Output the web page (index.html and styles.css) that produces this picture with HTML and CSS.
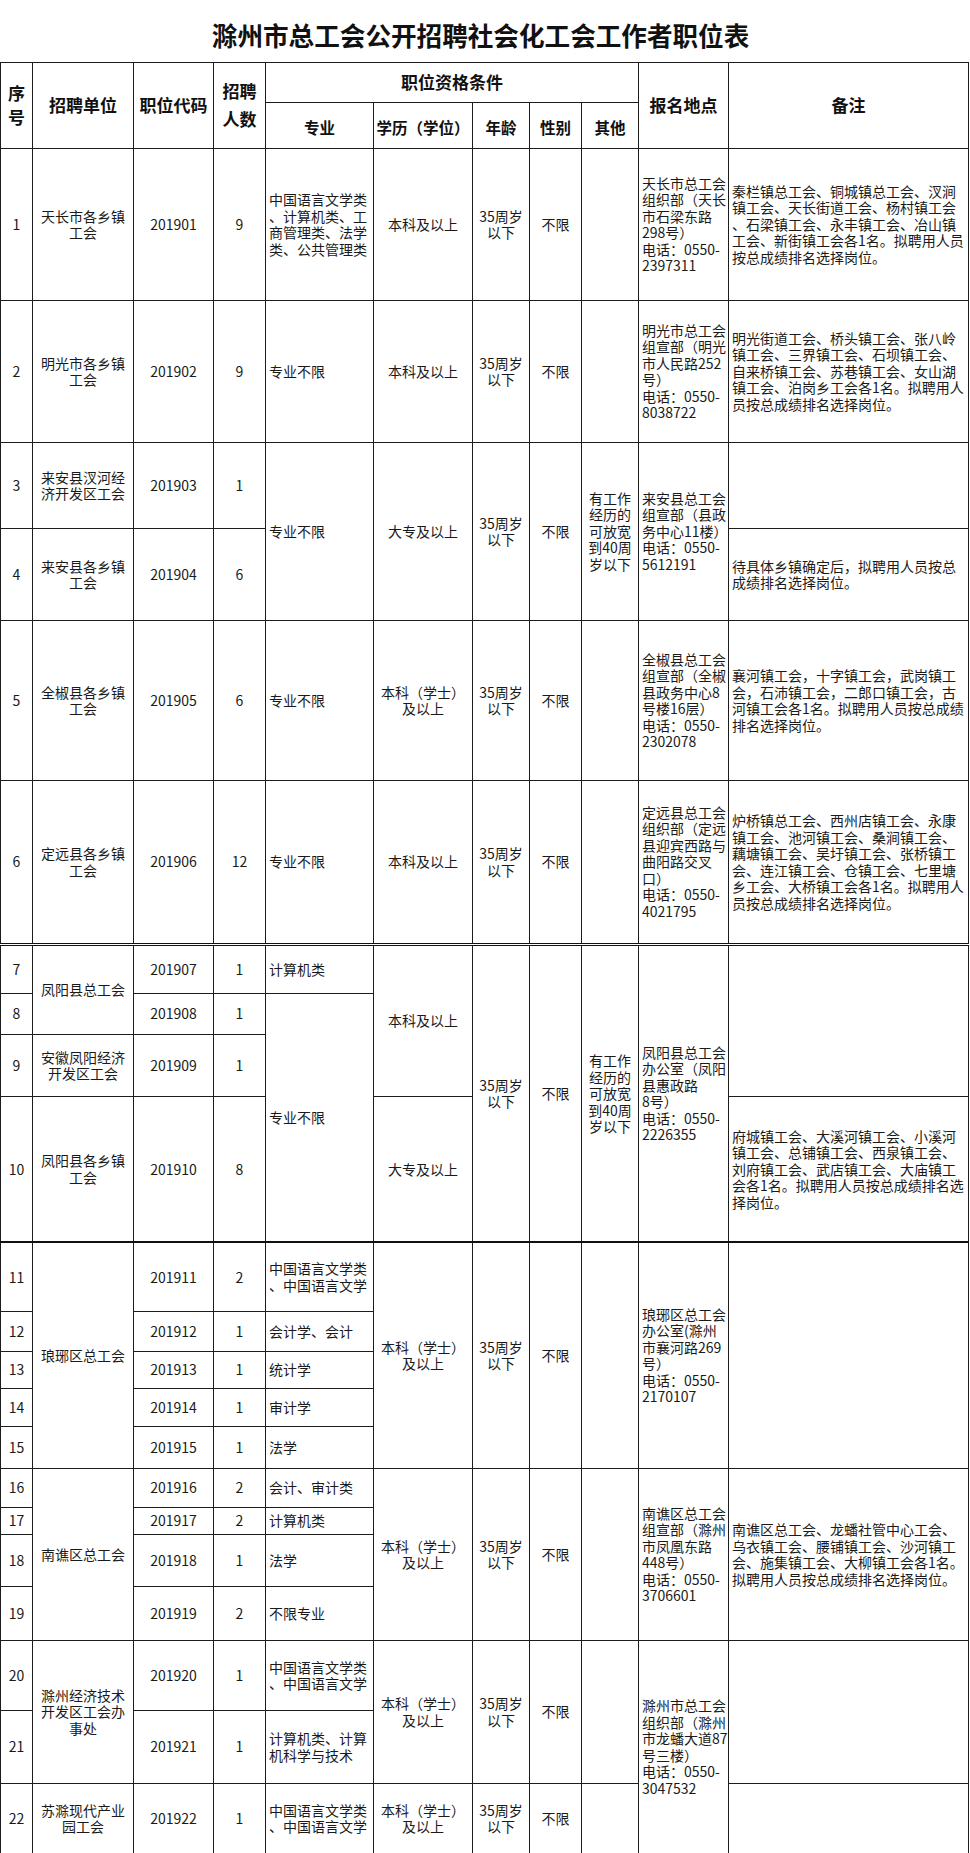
FILE: index.html
```html
<!DOCTYPE html>
<html lang="zh-CN">
<head>
<meta charset="utf-8">
<title>滁州市总工会公开招聘社会化工会工作者职位表</title>
<link rel="stylesheet" href="styles.css">
</head>
<body>
<table class="jobs">
  <colgroup>
    <col class="w-no"><col class="w-unit"><col class="w-code"><col class="w-num">
    <col class="w-major"><col class="w-edu"><col class="w-age"><col class="w-sex">
    <col class="w-other"><col class="w-place"><col class="w-note">
  </colgroup>
  <tr class="r-title"><td class="title" colspan="11">滁州市总工会公开招聘社会化工会工作者职位表</td></tr>
  <tr class="r-h1">
    <th rowspan="2" class="lh-no">序<br>号</th>
    <th rowspan="2">招聘单位</th>
    <th rowspan="2">职位代码</th>
    <th rowspan="2" class="lh-num">招聘<br>人数</th>
    <th colspan="5">职位资格条件</th>
    <th rowspan="2">报名地点</th>
    <th rowspan="2">备注</th>
  </tr>
  <tr class="r-h2">
    <th class="sub">专业</th><th class="sub">学历（学位）</th><th class="sub">年龄</th><th class="sub">性别</th><th class="sub">其他</th>
  </tr>

  <tr class="h152">
    <td>1</td><td>天长市各乡镇<br>工会</td><td>201901</td><td>9</td>
    <td class="l">中国语言文学类<br>、计算机类、工<br>商管理类、法学<br>类、公共管理类</td>
    <td>本科及以上</td><td>35周岁<br>以下</td><td>不限</td><td></td>
    <td class="l">天长市总工会<br>组织部（天长<br>市石梁东路<br>298号）<br>电话：0550-<br>2397311</td>
    <td class="l">秦栏镇总工会、铜城镇总工会、汊涧<br>镇工会、天长街道工会、杨村镇工会<br>、石梁镇工会、永丰镇工会、冶山镇<br>工会、新街镇工会各1名。拟聘用人员<br>按总成绩排名选择岗位。</td>
  </tr>
  <tr class="h142">
    <td>2</td><td>明光市各乡镇<br>工会</td><td>201902</td><td>9</td>
    <td class="l">专业不限</td>
    <td>本科及以上</td><td>35周岁<br>以下</td><td>不限</td><td></td>
    <td class="l">明光市总工会<br>组宣部（明光<br>市人民路252<br>号）<br>电话：0550-<br>8038722</td>
    <td class="l">明光街道工会、桥头镇工会、张八岭<br>镇工会、三界镇工会、石坝镇工会、<br>自来桥镇工会、苏巷镇工会、女山湖<br>镇工会、泊岗乡工会各1名。拟聘用人<br>员按总成绩排名选择岗位。</td>
  </tr>
  <tr class="h86">
    <td>3</td><td>来安县汊河经<br>济开发区工会</td><td>201903</td><td>1</td>
    <td rowspan="2" class="l">专业不限</td>
    <td rowspan="2">大专及以上</td><td rowspan="2">35周岁<br>以下</td><td rowspan="2">不限</td>
    <td rowspan="2">有工作<br>经历的<br>可放宽<br>到40周<br>岁以下</td>
    <td rowspan="2" class="l">来安县总工会<br>组宣部（县政<br>务中心11楼）<br>电话：0550-<br>5612191</td>
    <td></td>
  </tr>
  <tr class="h92">
    <td>4</td><td>来安县各乡镇<br>工会</td><td>201904</td><td>6</td>
    <td class="l">待具体乡镇确定后，拟聘用人员按总<br>成绩排名选择岗位。</td>
  </tr>
  <tr class="h160">
    <td>5</td><td>全椒县各乡镇<br>工会</td><td>201905</td><td>6</td>
    <td class="l">专业不限</td>
    <td>本科（学士）<br>及以上</td><td>35周岁<br>以下</td><td>不限</td><td></td>
    <td class="l">全椒县总工会<br>组宣部（全椒<br>县政务中心8<br>号楼16层）<br>电话：0550-<br>2302078</td>
    <td class="l">襄河镇工会，十字镇工会，武岗镇工<br>会，石沛镇工会，二郎口镇工会，古<br>河镇工会各1名。拟聘用人员按总成绩<br>排名选择岗位。</td>
  </tr>
  <tr class="h164">
    <td>6</td><td>定远县各乡镇<br>工会</td><td>201906</td><td>12</td>
    <td class="l">专业不限</td>
    <td>本科及以上</td><td>35周岁<br>以下</td><td>不限</td><td></td>
    <td class="l mark-green">定远县总工会<br>组织部（定远<br>县迎宾西路与<br>曲阳路交叉<br>口）<br>电话：0550-<br>4021795</td>
    <td class="l">炉桥镇总工会、西州店镇工会、永康<br>镇工会、池河镇工会、桑涧镇工会、<br>藕塘镇工会、吴圩镇工会、张桥镇工<br>会、连江镇工会、仓镇工会、七里塘<br>乡工会、大桥镇工会各1名。拟聘用人<br>员按总成绩排名选择岗位。</td>
  </tr>

  <tr class="h49 top-double">
    <td>7</td><td rowspan="2">凤阳县总工会</td><td>201907</td><td>1</td>
    <td class="l">计算机类</td>
    <td rowspan="3">本科及以上</td>
    <td rowspan="4">35周岁<br>以下</td><td rowspan="4">不限</td>
    <td rowspan="4">有工作<br>经历的<br>可放宽<br>到40周<br>岁以下</td>
    <td rowspan="4" class="l">凤阳县总工会<br>办公室（凤阳<br>县惠政路<br>8号）<br>电话：0550-<br>2226355</td>
    <td rowspan="3"></td>
  </tr>
  <tr class="h41">
    <td>8</td><td>201908</td><td>1</td>
    <td rowspan="3" class="l">专业不限</td>
  </tr>
  <tr class="h62">
    <td>9</td><td>安徽凤阳经济<br>开发区工会</td><td>201909</td><td>1</td>
  </tr>
  <tr class="h146">
    <td>10</td><td>凤阳县各乡镇<br>工会</td><td>201910</td><td>8</td>
    <td>大专及以上</td>
    <td class="l">府城镇工会、大溪河镇工会、小溪河<br>镇工会、总铺镇工会、西泉镇工会、<br>刘府镇工会、武店镇工会、大庙镇工<br>会各1名。拟聘用人员按总成绩排名选<br>择岗位。</td>
  </tr>

  <tr class="h69 top-thick">
    <td>11</td><td rowspan="5">琅琊区总工会</td><td>201911</td><td>2</td>
    <td class="l">中国语言文学类<br>、中国语言文学</td>
    <td rowspan="5">本科（学士）<br>及以上</td>
    <td rowspan="5">35周岁<br>以下</td><td rowspan="5">不限</td><td rowspan="5"></td>
    <td rowspan="5" class="l">琅琊区总工会<br>办公室(滁州<br>市襄河路269<br>号）<br>电话：0550-<br>2170107</td>
    <td rowspan="5"></td>
  </tr>
  <tr class="h40"><td>12</td><td>201912</td><td>1</td><td class="l">会计学、会计</td></tr>
  <tr class="h37"><td>13</td><td>201913</td><td>1</td><td class="l">统计学</td></tr>
  <tr class="h38"><td>14</td><td>201914</td><td>1</td><td class="l">审计学</td></tr>
  <tr class="h42"><td>15</td><td>201915</td><td>1</td><td class="l">法学</td></tr>

  <tr class="h39">
    <td>16</td><td rowspan="4">南谯区总工会</td><td>201916</td><td>2</td>
    <td class="l">会计、审计类</td>
    <td rowspan="4">本科（学士）<br>及以上</td>
    <td rowspan="4">35周岁<br>以下</td><td rowspan="4">不限</td><td rowspan="4"></td>
    <td rowspan="4" class="l">南谯区总工会<br>组宣部（滁州<br>市凤凰东路<br>448号）<br>电话：0550-<br>3706601</td>
    <td rowspan="4" class="l">南谯区总工会、龙蟠社管中心工会、<br>乌衣镇工会、腰铺镇工会、沙河镇工<br>会、施集镇工会、大柳镇工会各1名。<br>拟聘用人员按总成绩排名选择岗位。</td>
  </tr>
  <tr class="h27"><td>17</td><td>201917</td><td>2</td><td class="l">计算机类</td></tr>
  <tr class="h52"><td>18</td><td>201918</td><td>1</td><td class="l">法学</td></tr>
  <tr class="h54"><td>19</td><td>201919</td><td>2</td><td class="l">不限专业</td></tr>

  <tr class="h70">
    <td>20</td><td rowspan="2">滁州经济技术<br>开发区工会办<br>事处</td><td>201920</td><td>1</td>
    <td class="l">中国语言文学类<br>、中国语言文学</td>
    <td rowspan="2">本科（学士）<br>及以上</td>
    <td rowspan="2">35周岁<br>以下</td><td rowspan="2">不限</td><td rowspan="2"></td>
    <td rowspan="3" class="l">滁州市总工会<br>组织部（滁州<br>市龙蟠大道87<br>号三楼）<br>电话：0550-<br>3047532</td>
    <td rowspan="2"></td>
  </tr>
  <tr class="h73">
    <td>21</td><td>201921</td><td>1</td>
    <td class="l">计算机类、计算<br>机科学与技术</td>
  </tr>
  <tr class="h70">
    <td>22</td><td>苏滁现代产业<br>园工会</td><td>201922</td><td>1</td>
    <td class="l">中国语言文学类<br>、中国语言文学</td>
    <td>本科（学士）<br>及以上</td><td>35周岁<br>以下</td><td>不限</td><td></td>
    <td></td>
  </tr>
</table>
</body>
</html>
```

FILE: styles.css
```css
html, body {
  margin: 0;
  padding: 0;
  background: #ffffff;
}

body {
  font-family: "Noto Sans CJK SC", "Noto Sans", sans-serif;
  color: #1a1a1a;
}

.jobs {
  border-collapse: collapse;
  table-layout: fixed;
  width: 968px;
}

.w-no { width: 32px; }
.w-unit { width: 101px; }
.w-code { width: 80px; }
.w-num { width: 52px; }
.w-major { width: 108px; }
.w-edu { width: 99px; }
.w-age { width: 57px; }
.w-sex { width: 52px; }
.w-other { width: 57px; }
.w-place { width: 90px; }
.w-note { width: 240px; }

.jobs td,
.jobs th {
  border: 1px solid #1c1c1c;
  padding: 0 2px;
  text-align: center;
  vertical-align: middle;
  font-size: 14px;
  line-height: 16.5px;
  font-weight: 400;
  white-space: nowrap;
  overflow: visible;
}

.jobs td.l {
  text-align: left;
  padding: 0 1px 0 3px;
}

.jobs td.title {
  border-top: none;
  border-left: none;
  border-right: none;
  font-size: 25.6px;
  line-height: 30px;
  font-weight: 700;
  color: #111;
  padding: 8px 8px 0 0;
}

.jobs th {
  font-size: 17px;
  line-height: 24px;
  font-weight: 700;
  color: #111;
}

.jobs th.sub {
  font-size: 15.5px;
  padding-top: 4px;
}

.jobs th.lh-num {
  line-height: 28px;
}

.jobs .mark-green {
  border-bottom: 2px solid #3e9a3e;
}

.top-double td {
  border-top: 3px double #111;
}

.top-thick td {
  border-top: 2px solid #111;
}

.r-title { height: 62px; }
.r-h1 { height: 40px; }
.r-h2 { height: 46px; }
.h152 { height: 152px; }
.h142 { height: 142px; }
.h86 { height: 86px; }
.h92 { height: 92px; }
.h160 { height: 160px; }
.h164 { height: 164px; }
.h49 { height: 49px; }
.h41 { height: 41px; }
.h62 { height: 62px; }
.h146 { height: 146px; }
.h69 { height: 69px; }
.h40 { height: 40px; }
.h37 { height: 37px; }
.h38 { height: 38px; }
.h42 { height: 42px; }
.h39 { height: 39px; }
.h27 { height: 27px; }
.h52 { height: 52px; }
.h54 { height: 54px; }
.h70 { height: 70px; }
.h73 { height: 73px; }
```
